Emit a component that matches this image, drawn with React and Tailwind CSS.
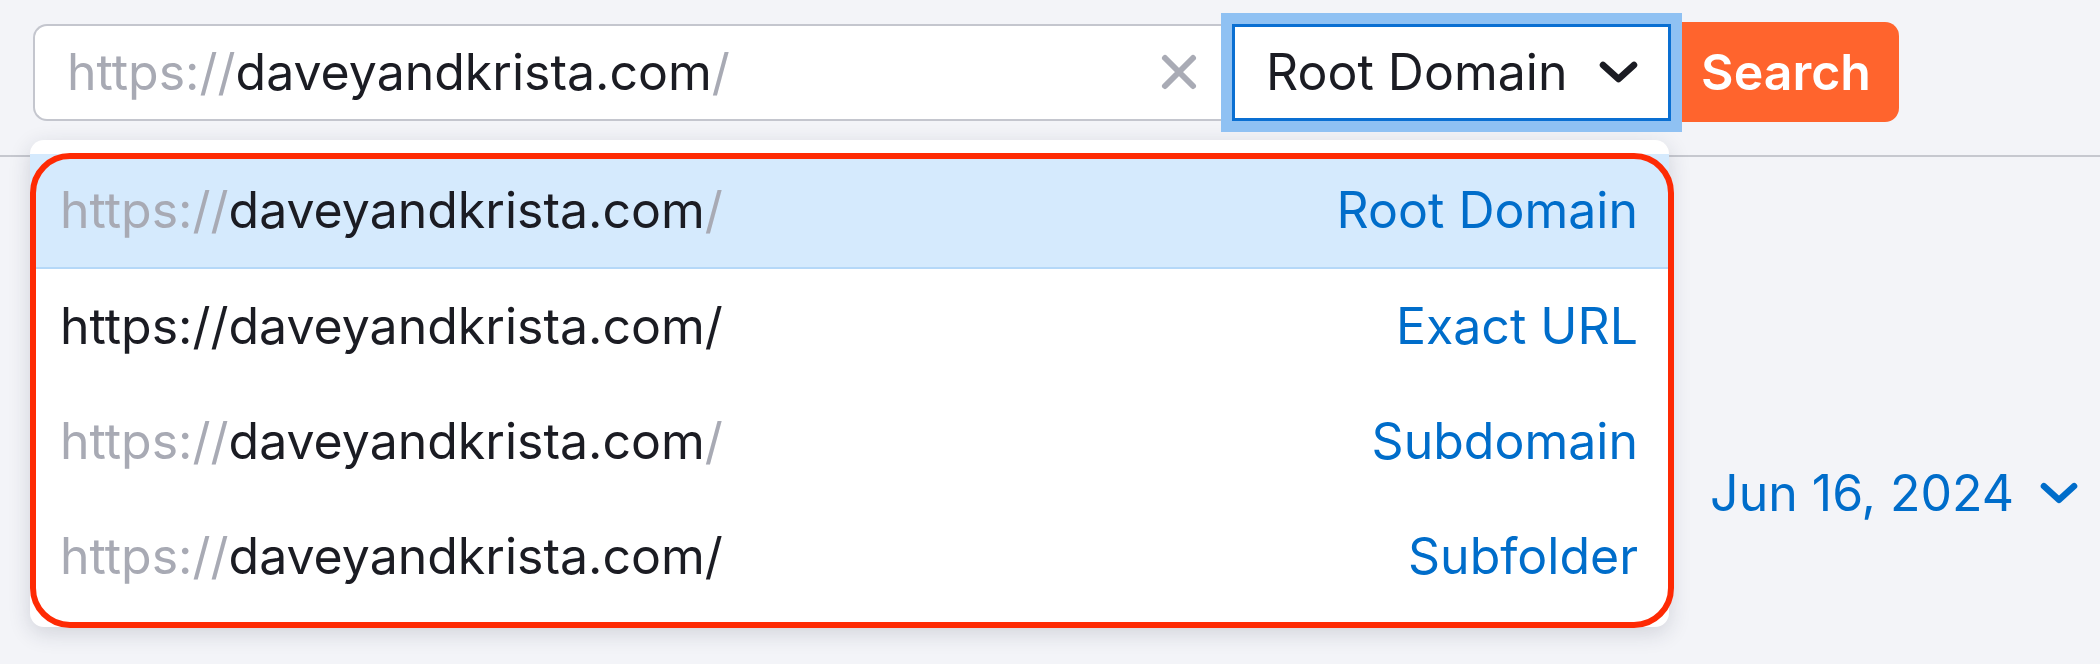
import React from 'react';

const rows = [
  { label: 'Root Domain', active: true, parts: [['https://', 'g'], ['daveyandkrista.com', 'd'], ['/', 'g']] },
  { label: 'Exact URL', parts: [['https://daveyandkrista.com/', 'd']] },
  { label: 'Subdomain', parts: [['https://', 'g'], ['daveyandkrista.com', 'd'], ['/', 'g']] },
  { label: 'Subfolder', parts: [['https://', 'g'], ['daveyandkrista.com/', 'd']] },
];

function UrlText({ parts }) {
  return (
    <span>
      {parts.map(([t, c], i) => (
        <span key={i} className={c === 'g' ? 'text-[#a8aab4]' : 'text-[#1b1c23]'}>{t}</span>
      ))}
    </span>
  );
}

function Chevron({ color, w = 39, h = 22 }) {
  return (
    <svg width={w} height={h} viewBox="0 0 39 22" fill="none">
      <path d="M4 4 L19.5 18 L35 4" stroke={color} strokeWidth="6.5" strokeLinecap="round" strokeLinejoin="round" />
    </svg>
  );
}

export default function App() {
  return (
    <div className="relative w-[2100px] h-[664px] overflow-hidden bg-[#f3f4f8] font-['Inter',sans-serif] text-[50px]">
      {/* search bar */}
      <div className="flex items-center pl-[33px] pt-[22px] h-[122px]">
        <div className="flex items-center justify-between w-[1199px] h-[97px] bg-white border-2 border-r-0 border-[#c4c6ce] rounded-l-[14px] pl-[32px] pr-[34px]">
          <UrlText parts={[['https://', 'g'], ['daveyandkrista.com', 'd'], ['/', 'g']]} />
          <svg width="38" height="38" viewBox="0 0 38 38" fill="none">
            <path d="M5 5 L33 33 M33 5 L5 33" stroke="#a9abb5" strokeWidth="6" strokeLinecap="round" />
          </svg>
        </div>
        <div className="relative z-10 flex items-center justify-between w-[439px] h-[97px] bg-white border-[3px] border-[#0a6fd2] shadow-[0_0_0_11px_#8fc1f3] pl-[31px] pr-[30px] text-[#1b1c23]">
          <span>Root Domain</span>
          <Chevron color="#1b1c23" />
        </div>
        <button className="w-[228px] h-[100px] bg-[#ff642d] rounded-r-[14px] text-white font-semibold pl-[2px]">
          Search
        </button>
      </div>

      {/* divider */}
      <div className="mt-[33px] h-[2px] bg-[#c6c8cf]" />

      {/* date */}
      <div className="flex justify-end items-center gap-[26px] pr-[22px] mt-[306px] text-[#006dca] leading-[60px]">
        <span>Jun 16, 2024</span>
        <Chevron color="#006dca" w={38} h={22} />
      </div>

      <div className="absolute left-[31px] top-[155px] w-[5px] h-[30px] bg-[#1f74d6]" />

      {/* dropdown */}
      <div className="absolute left-[30px] top-[140px] w-[1639px] bg-white rounded-[14px] shadow-[0_6px_22px_rgba(30,35,60,0.16)] pt-[14px] pb-[13px]">
        {rows.map((r) => (
          <div
            key={r.label}
            className={
              r.active
                ? 'flex items-center justify-between h-[115px] pl-[30px] pr-[31px] bg-[#d5eafd] border-b-2 border-[#b5d8f8]'
                : 'flex items-center justify-between h-[115px] pl-[30px] pr-[31px]'
            }
          >
            <UrlText parts={r.parts} />
            <span className="text-[#006dca]">{r.label}</span>
          </div>
        ))}
      </div>

      {/* annotation */}
      <div className="absolute left-[30px] top-[153px] w-[1644px] h-[475px] border-[6px] border-[#fe2a04] rounded-[40px] pointer-events-none" />
    </div>
  );
}
